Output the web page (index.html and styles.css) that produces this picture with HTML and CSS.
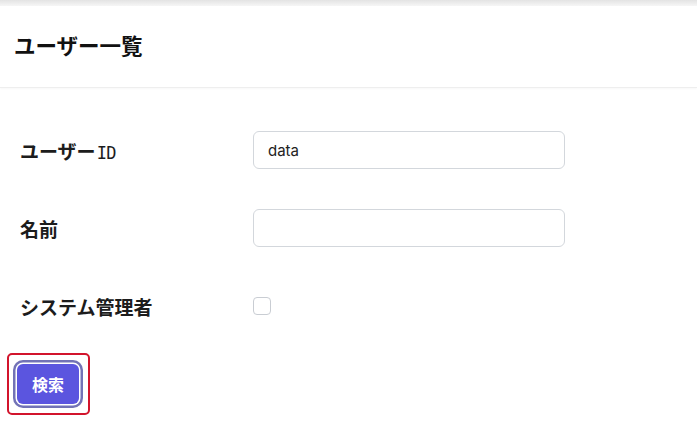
FILE: index.html
```html
<!DOCTYPE html>
<html lang="ja">
<head>
<meta charset="utf-8">
<link rel="stylesheet" href="styles.css">
</head>
<body>
<div class="topshade"></div>
<header class="page-header">
  <h1 class="title">ユーザー一覧</h1>
</header>
<main class="content">
  <div class="form-grid">
    <label class="label">ユーザー<span class="latin">ID</span></label>
    <div class="field"><input class="input" type="text" value="data"></div>
    <label class="label">名前</label>
    <div class="field"><input class="input" type="text" value=""></div>
    <label class="label">システム管理者</label>
    <div class="field"><span class="checkbox"></span></div>
  </div>
  <div class="highlight">
    <button class="btn" type="button">検索</button>
  </div>
</main>
</body>
</html>
```

FILE: styles.css
```css
html, body {
  margin: 0;
  padding: 0;
  background: #ffffff;
}
body {
  font-family: "Noto Sans CJK JP", "Noto Sans", sans-serif;
  color: #1a1a1a;
}
.topshade {
  height: 6px;
  background: linear-gradient(#e3e3e3, #f6f6f6);
}
.page-header {
  height: 82px;
  box-sizing: border-box;
  display: flex;
  align-items: center;
  padding: 0 0 4px 14px;
  border-bottom: 1px solid #eeeeee;
  box-shadow: 0 1px 2px rgba(0, 0, 0, 0.03);
}
.title {
  margin: 0;
  font-size: 21.5px;
  font-weight: 700;
  color: #111;
}
.content {
  padding: 43px 0 0 7px;
}
.form-grid {
  display: grid;
  grid-template-columns: 233px 312px;
  grid-auto-rows: 38px;
  row-gap: 40px;
  align-items: center;
  padding-left: 13px;
}
.label {
  font-size: 19px;
  font-weight: 700;
  color: #1c1c1c;
}
.latin {
  font-family: "DejaVu Sans Mono", monospace;
  font-weight: 400;
  font-size: 17px;
  letter-spacing: -0.5px;
  margin-left: 1px;
}
.field {
  display: flex;
  align-items: center;
  height: 38px;
}
.input {
  width: 312px;
  height: 38px;
  box-sizing: border-box;
  border: 1px solid #d3d7dc;
  border-radius: 6px;
  padding: 0 14px;
  font-family: Inter, "Noto Sans", sans-serif;
  font-size: 15px;
  color: #222;
  outline: none;
  background: #fff;
}
.checkbox {
  display: block;
  width: 18px;
  height: 18px;
  box-sizing: border-box;
  border: 1px solid #c9cdd3;
  border-radius: 4px;
  background: #fff;
}
.highlight {
  display: inline-block;
  margin-top: 28px;
  border: 2px solid #d2142c;
  border-radius: 5px;
  padding: 9px 9px 9px 8px;
}
.btn {
  display: block;
  width: 62px;
  height: 40px;
  border: none;
  border-radius: 6px;
  background: #5b55df;
  color: #fff;
  font-family: "Noto Sans CJK JP", sans-serif;
  font-size: 16px;
  font-weight: 700;
  box-shadow: 0 0 0 1.5px #ffffff, 0 0 0 4px #7272b6;
  padding: 0;
}
```
